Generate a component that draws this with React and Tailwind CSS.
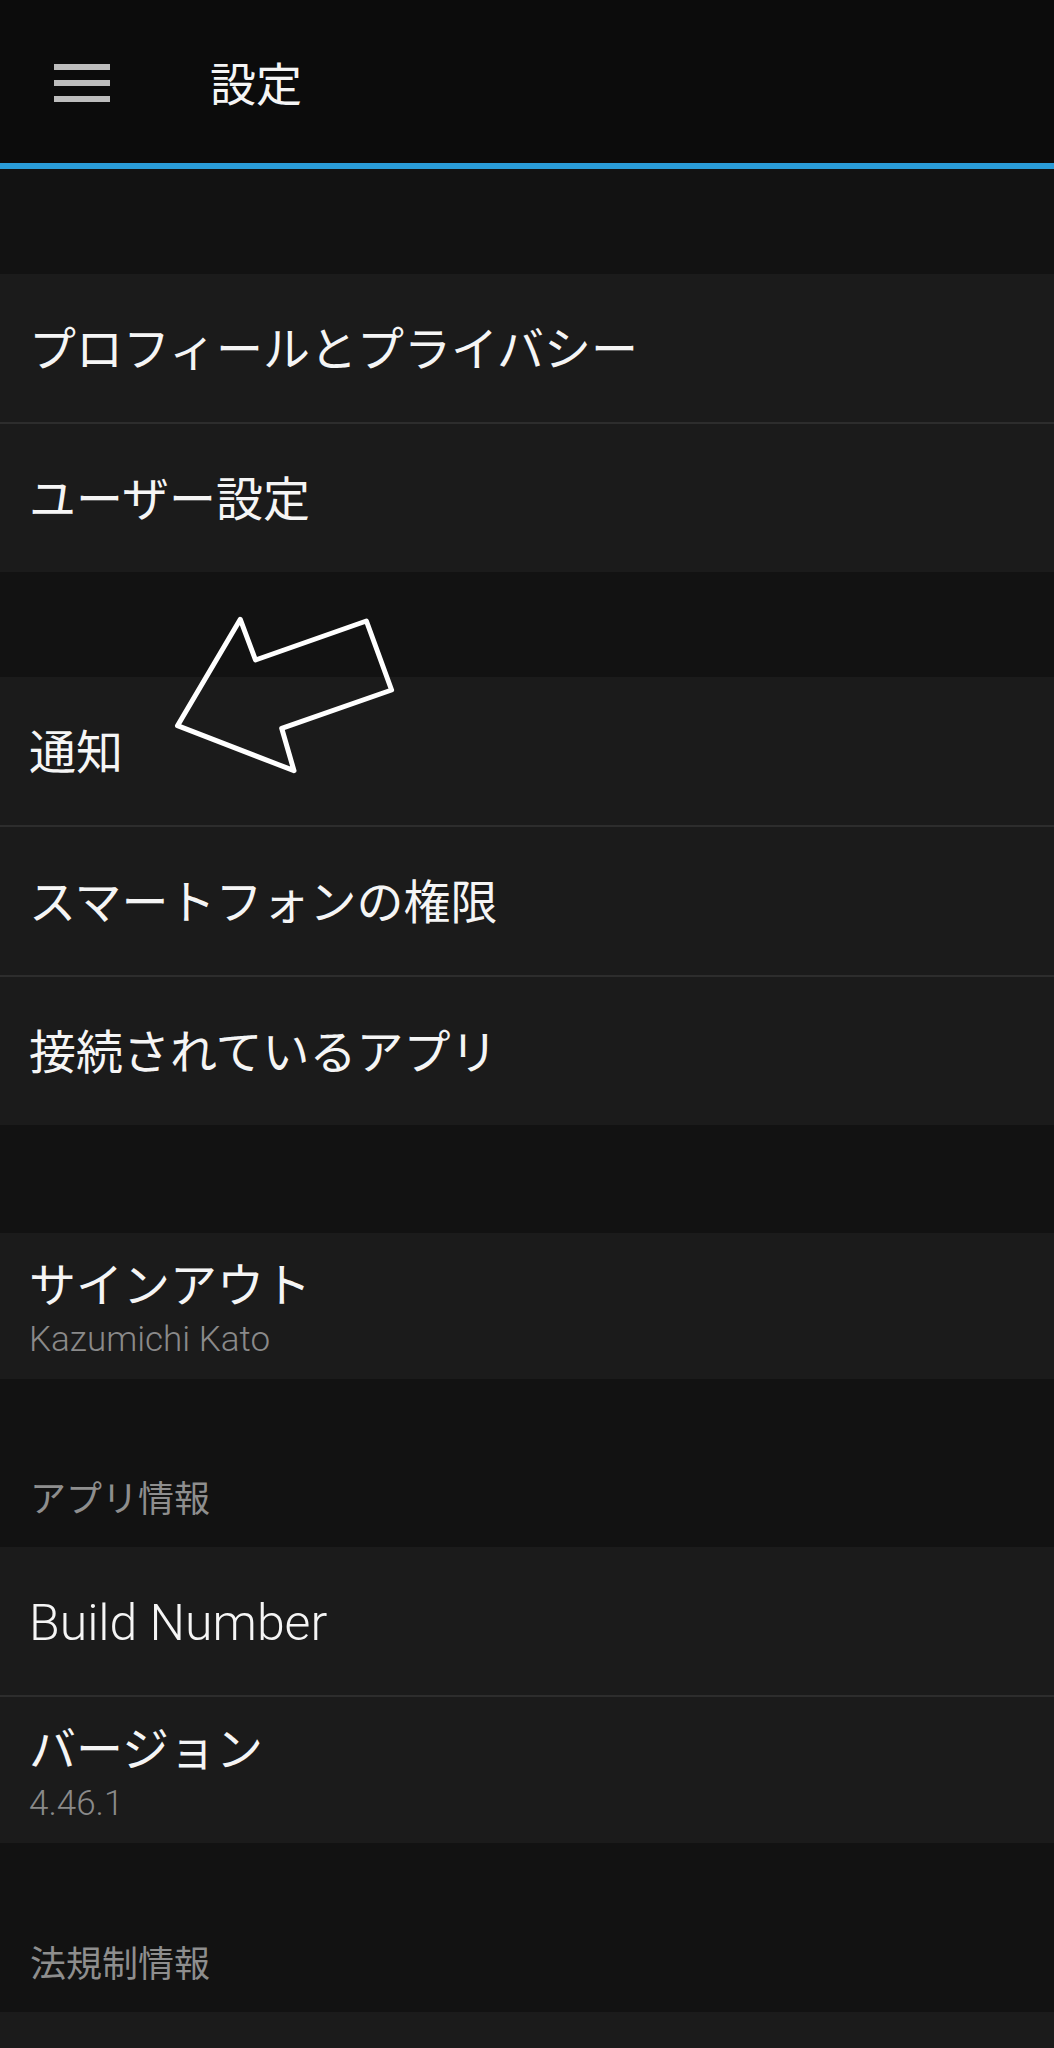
const font = "font-['Roboto','Noto_Sans_CJK_JP',sans-serif]";

function Row({ title, sub, latin }) {
  if (sub) {
    return (
      <div className="h-[146px] bg-[#1b1b1b] pl-[29px] pt-[25px]">
        <div className="text-[47px] leading-[56px] text-[#f5f5f5]">{title}</div>
        <div className="mt-[6px] text-[35px] font-light leading-[40px] text-[#8a8a8a]">{sub}</div>
      </div>
    );
  }
  return (
    <div
      className={`flex h-[148px] items-center bg-[#1b1b1b] pl-[29px] pt-[5px] text-[#f5f5f5] ${
        latin ? "text-[50px] font-light" : "text-[47px]"
      }`}
    >
      {title}
    </div>
  );
}

function Divider() {
  return <div className="h-[2px] bg-[#2d2d2d]" />;
}

function SectionLabel({ children, h }) {
  return (
    <div className={`${h} flex items-end pb-[23px] pl-[30px] text-[36px] leading-[48px] text-[#8e8e8e]`}>
      {children}
    </div>
  );
}

export default function App() {
  return (
    <div className={`relative min-h-[2048px] w-[1054px] bg-[#121212] ${font}`}>
      {/* top bar */}
      <header className="flex h-[169px] items-center border-b-[6px] border-[#2a9cd8] bg-[#0c0c0c] pl-[54px]">
        <div className="flex flex-col gap-[10px] pt-[3px]">
          <span className="block h-[6px] w-[56px] bg-[#bdbdbd]" />
          <span className="block h-[6px] w-[56px] bg-[#bdbdbd]" />
          <span className="block h-[6px] w-[56px] bg-[#bdbdbd]" />
        </div>
        <h1 className="ml-[100px] pt-[7px] text-[46px] font-normal text-[#f5f5f5]">設定</h1>
      </header>

      <div className="h-[105px]" />
      <Row title="プロフィールとプライバシー" />
      <Divider />
      <Row title="ユーザー設定" />

      <div className="h-[105px]" />
      <Row title="通知" />
      <Divider />
      <Row title="スマートフォンの権限" />
      <Divider />
      <Row title="接続されているアプリ" />

      <div className="h-[108px]" />
      <Row title="サインアウト" sub="Kazumichi Kato" />

      <SectionLabel h="h-[168px]">アプリ情報</SectionLabel>
      <Row title="Build Number" latin />
      <Divider />
      <Row title="バージョン" sub="4.46.1" />

      <SectionLabel h="h-[169px]">
        <span className="pt-[4px]">法規制情報</span>
      </SectionLabel>
      <Row title="" />

      {/* hand-drawn arrow pointing at 通知 */}
      <svg
        className="pointer-events-none absolute left-[170px] top-[612px]"
        width="230"
        height="166"
        viewBox="0 0 230 166"
        fill="none"
      >
        <polygon
          points="7.5,113.7 70.3,7.3 85.5,48 196.4,9 221.6,78 111.7,116.3 124,158.7"
          stroke="#ffffff"
          strokeWidth="5"
          strokeLinejoin="round"
        />
      </svg>
    </div>
  );
}
